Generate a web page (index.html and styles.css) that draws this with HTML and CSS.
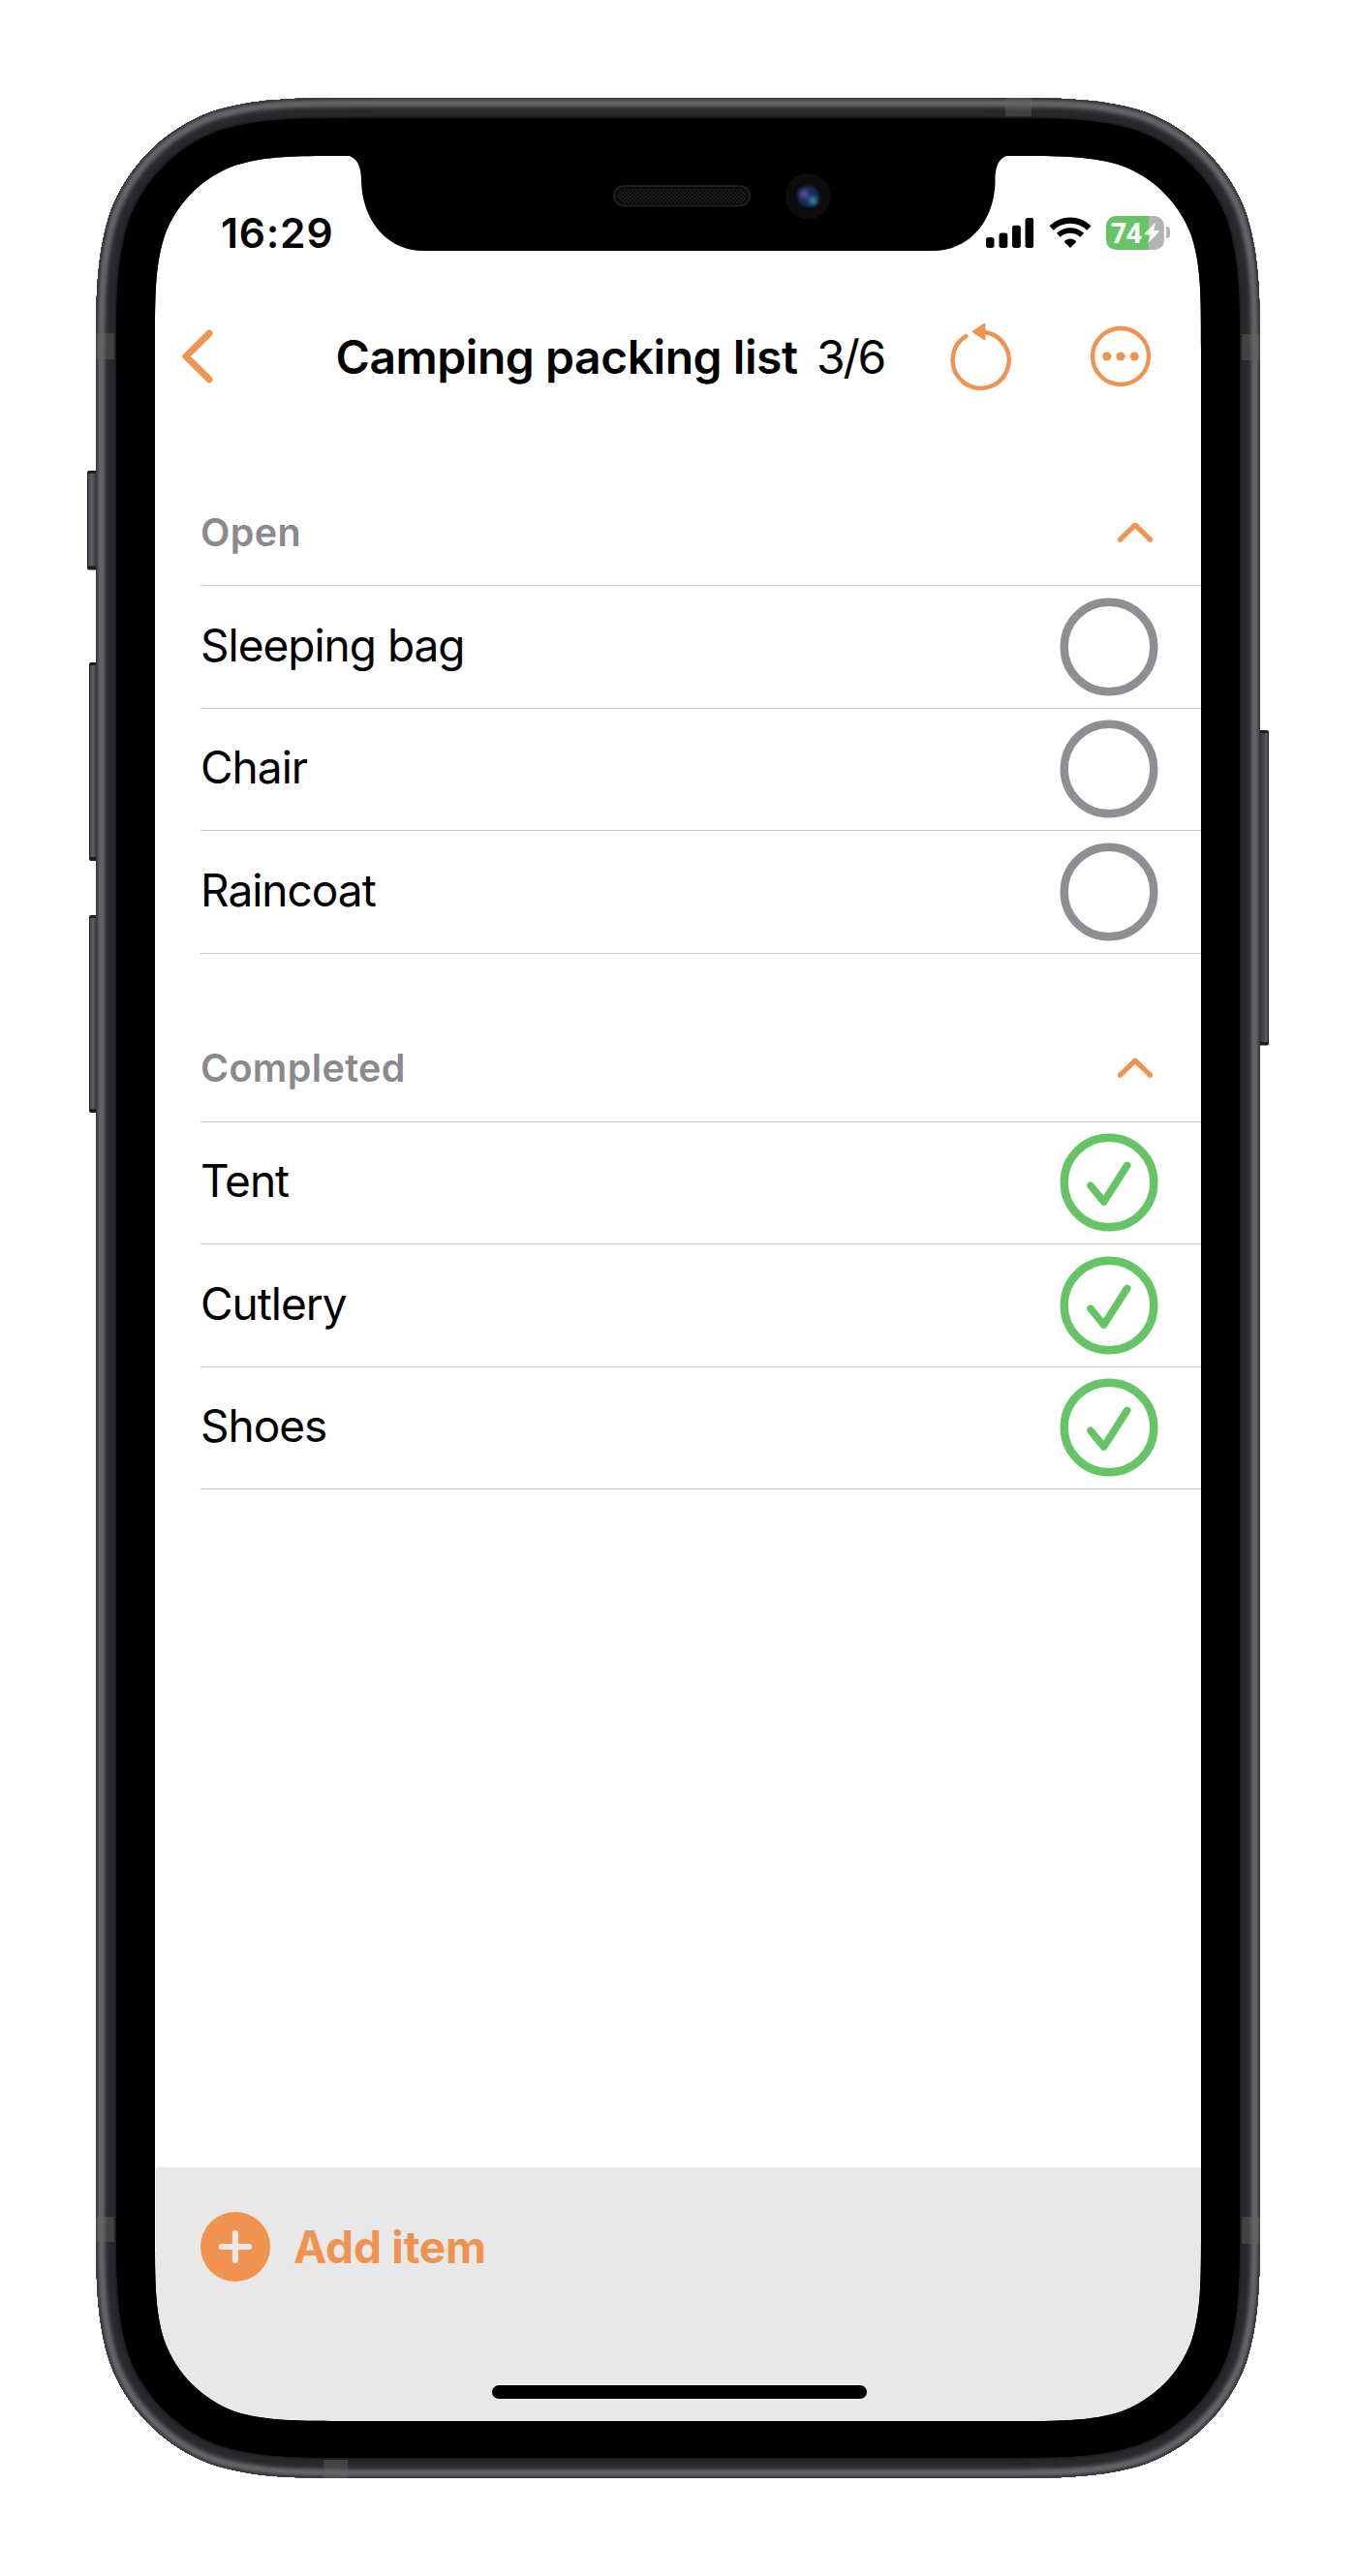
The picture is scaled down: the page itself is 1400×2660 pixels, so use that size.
FILE: index.html
```html
<!DOCTYPE html>
<html lang="en">
<head>
<meta charset="utf-8">
<title>Camping packing list</title>
<link rel="stylesheet" href="styles.css">
</head>
<body>
<svg class="defs" width="0" height="0" aria-hidden="true">
  <symbol id="chevron-up" viewBox="0 0 38 24"><path d="M3.5 19.2 19 4.2 34.5 19.2" fill="none" stroke="currentColor" stroke-width="5.2" stroke-linecap="round" stroke-linejoin="round"/></symbol>
  <symbol id="ring" viewBox="0 0 102 102"><circle cx="51" cy="51" r="46.3" fill="none" stroke="currentColor" stroke-width="8.4"/></symbol>
  <symbol id="ring-check" viewBox="0 0 102 102"><circle cx="51" cy="51" r="46.3" fill="none" stroke="currentColor" stroke-width="8.4"/><path d="M32 54.3 45.7 71 69.7 33.4" fill="none" stroke="currentColor" stroke-width="7.6" stroke-linecap="round" stroke-linejoin="round"/></symbol>
</svg>
<div class="stage">
  <main class="screen">
    <div class="status">
      <span class="time">16:29</span>
      <div class="indicators">
        <svg class="signal" viewBox="0 0 49 31"><rect y="20" width="8.5" height="11" rx="2.6"/><rect x="13.5" y="15.5" width="8.8" height="15.5" rx="2.6"/><rect x="27" y="7.7" width="8.8" height="23.3" rx="2.6"/><rect x="40.5" width="8.7" height="31" rx="2.6"/></svg>
        <svg class="wifi" viewBox="0 0 44 32"><g fill="none" stroke="#000" stroke-width="6.3"><path d="M2.6 11.4a28 28 0 0 1 38.8 0"/><path d="M9.8 18.8a17.8 17.8 0 0 1 24.4 0" stroke-width="5.6"/></g><path d="M22 32 16.3 26.3q-.8-1 .2-1.7a9 9 0 0 1 11 0q1 .7.2 1.7z"/></svg>
        <div class="battery"><span class="level">74</span><svg class="bolt" viewBox="0 0 16 23"><path d="M12.3.6.8 12 Q0 13.4 1.6 13.6H6.6L4.2 22.2 15.4 10.4Q16 9.2 14.7 9H10z"/></svg></div>
        <i class="nub"></i>
      </div>
    </div>

    <header class="nav">
      <svg class="back" viewBox="0 0 34 56"><path d="M29 4.3 5 28 29 51.7" fill="none" stroke="currentColor" stroke-width="7" stroke-linecap="round" stroke-linejoin="round"/></svg>
      <h1>Camping packing list</h1>
      <span class="count">3/6</span>
      <svg class="reset" viewBox="0 0 64 70"><path d="M17.3 14.2A29 29 0 1 0 36 10" fill="none" stroke="currentColor" stroke-width="4.4" stroke-linecap="round"/><path d="M24.6 9.4 36.5 1.6V17.2z" fill="currentColor" stroke="currentColor" stroke-width="1.8" stroke-linejoin="round"/></svg>
      <svg class="more" viewBox="0 0 64 64"><circle cx="32" cy="32" r="29" fill="none" stroke="currentColor" stroke-width="4.3"/><g fill="currentColor"><circle cx="17.8" cy="32" r="4.6"/><circle cx="32" cy="32" r="4.6"/><circle cx="46.2" cy="32" r="4.6"/></g></svg>
    </header>

    <div class="lists">
      <section>
        <h2>Open<svg class="chevron"><use href="#chevron-up"/></svg></h2>
        <ul>
          <li><span>Sleeping bag</span><svg class="mark"><use href="#ring"/></svg></li>
          <li><span>Chair</span><svg class="mark"><use href="#ring"/></svg></li>
          <li><span>Raincoat</span><svg class="mark"><use href="#ring"/></svg></li>
        </ul>
      </section>
      <section class="completed">
        <h2>Completed<svg class="chevron"><use href="#chevron-up"/></svg></h2>
        <ul>
          <li><span>Tent</span><svg class="mark"><use href="#ring-check"/></svg></li>
          <li><span>Cutlery</span><svg class="mark"><use href="#ring-check"/></svg></li>
          <li><span>Shoes</span><svg class="mark"><use href="#ring-check"/></svg></li>
        </ul>
      </section>
    </div>

    <footer>
      <div class="add">
        <svg class="plus" viewBox="0 0 72 72"><circle cx="36" cy="36" r="36" fill="currentColor"/><path d="M36 22v28M22 36h28" stroke="#e8e8e8" stroke-width="6.2" stroke-linecap="round"/></svg>
        <span>Add item</span>
      </div>
      <div class="home"></div>
    </footer>
  </main>

  <svg class="device" id="device" viewBox="0 0 1400 2660" aria-hidden="true"></svg>
</div>
<script src="device.js"></script>
</body>
</html>
```
FILE: styles.css
```css
* { box-sizing: border-box; margin: 0; padding: 0; }
body { background: #fff; font-family: Inter, "Liberation Sans", sans-serif; color: #000; }
svg { display: block; flex: none; }
.defs { position: absolute; }
.stage { position: relative; width: 1400px; height: 2660px; padding: 161px 160px 160px; overflow: hidden; }
.device { position: absolute; inset: 0; width: 1400px; height: 2660px; pointer-events: none; }
.screen { width: 1080px; height: 2339px; display: flex; flex-direction: column; background: #fff; }

.status { display: flex; justify-content: space-between; align-items: center; height: 80px; margin-top: 39px; padding: 0 32px 0 68px; }
.time { font-size: 42.5px; font-weight: 600; letter-spacing: .8px; }
.indicators { display: flex; align-items: center; }
.signal { width: 49px; height: 31px; margin-right: 16px; }
.wifi { width: 44px; height: 32px; margin-right: 15px; }
.battery { display: flex; align-items: center; width: 60px; height: 35px; padding-left: 5px; border-radius: 10px; background: linear-gradient(90deg, #64c466 44px, #b4b4b4 44px); }
.level { font: 700 28px/35px "Open Sans", sans-serif; letter-spacing: 0; color: #fff; }
.bolt { width: 16px; height: 23px; fill: #fff; margin-left: 2px; }
.nub { width: 4px; height: 12px; margin-left: 2px; border-radius: 0 4px 4px 0; background: #b4b4b4; }

.nav { display: flex; align-items: center; height: 80px; margin-top: 48px; padding-left: 26.5px; color: #f09351; }
.back { width: 34px; height: 56px; }
.nav h1 { width: 480px; margin-left: 126px; font-size: 48px; font-weight: 600; letter-spacing: -.45px; white-space: nowrap; color: #000; }
.count { width: 72px; margin-left: 16.5px; font-size: 48px; letter-spacing: -2.2px; color: #000; white-space: nowrap; }
.reset { width: 64px; height: 70px; margin-left: 65px; }
.more { width: 64px; height: 64px; margin-left: 81px; }

.lists { flex: 1; padding: 87px 0 0 47px; }
h2 { display: flex; justify-content: space-between; align-items: center; height: 110px; border-bottom: 1px solid #c8c8ca; padding: 0 49px 0 0; font-size: 39.5px; font-weight: 600; letter-spacing: .35px; color: #8a8a8e; }
.completed h2 { height: 174px; padding-top: 64px; }
.chevron { width: 38px; height: 24px; color: #f09351; }
ul { list-style: none; }
li { display: flex; justify-content: space-between; align-items: center; height: 126.5px; border-bottom: 1px solid #c8c8ca; padding-right: 44.3px; font-size: 46px; letter-spacing: -1px; }
li span { padding-bottom: 4px; }
.mark { width: 102px; height: 102px; color: #8e8e93; }
.completed .mark { color: #64c466; }

footer { height: 262px; margin-left: 1px; background: #e8e8e8; display: flex; flex-direction: column; justify-content: space-between; padding: 46px 0 23px 46px; }
.add { display: flex; align-items: center; gap: 24px; height: 72px; font-size: 46px; font-weight: 700; letter-spacing: -.2px; color: #f09351; }
.plus { width: 72px; height: 72px; }
.home { width: 387px; height: 14px; margin-left: 301px; border-radius: 7px; background: #000; box-shadow: 0 -1px 0 #f8f8f8; }
```
FILE: device.js
```js
// Rounded rectangle with continuous-curvature corners.
function squircle(x0, y0, x1, y1, r) {
  const k = [1.52866, 1.08849, 0.86841, 0.63149, 0.07491, 0.37282, 0.16906].map(v => v * r);
  const corner = (cx, cy, sx, sy, flip) => {
    const p = (a, b) => `${(cx + sx * a).toFixed(2)} ${(cy + sy * b).toFixed(2)}`;
    const q = (a, b) => flip ? p(b, a) : p(a, b);
    return `L${q(0, k[0])}C${q(0, k[1])} ${q(0, k[2])} ${q(k[4], k[3])}` +
      `C${q(k[6], k[5])} ${q(k[5], k[6])} ${q(k[3], k[4])}C${q(k[2], 0)} ${q(k[1], 0)} ${q(k[0], 0)}`;
  };
  return ('M' + corner(x0, y0, 1, 1, false).slice(1)) + corner(x1, y0, -1, 1, true) +
    corner(x1, y1, -1, -1, false) + corner(x0, y1, 1, -1, true) + 'Z';
}

const outer = squircle(99, 101, 1301, 2559, 190);
const inner = squircle(120, 122, 1280, 2538, 170);
const screen = squircle(160, 161, 1240, 2500, 131);
const notch = 'M357 160C368 162 373 170 373 187C374 228 400 259 437 259H963C1001 259 1027 228 1027.5 187C1027.5 170 1032 162 1043 160Z';

// Metal rim tones, one per pixel from the outside inwards.
const rim = ['#36373b', '#45464a', '#505155', '#5c5c60', '#636367', '#636367', '#626266', '#5c5c60', '#505054',
  '#444448', '#38383c', '#313135', '#2c2c30', '#2a2a2f', '#29292e', '#28282d', '#27272c', '#27272b', '#25252a', '#202024', '#1c1c21'];
const rings = rim.map((c, i) => `<use href="#rim" stroke="${c}" stroke-width="${(i + 1) * 2}"/>`).reverse().join('');

const keys = [[90, 486, 12, 102.5], [92, 684, 10, 205], [92, 945, 10, 204]];
const left = keys.map(([x, y, w, h]) => `<rect x="${x}" y="${y}" width="${w}" height="${h}" rx="2" fill="#1d1d21"/><rect x="${x + 1}" y="${y + 3}" width="${w}" height="${h - 7}" fill="url(#key)"/>`).join('');
const bands = [[1038, 101, 27, 19], [99, 344, 19, 27], [1282, 345, 19, 27], [99, 2289, 19, 26], [1282, 2289, 19, 28], [334, 2540, 25, 19]]
  .map(([x, y, w, h]) => `<rect x="${x}" y="${y}" width="${w}" height="${h}"/>`).join('');

document.getElementById('device').innerHTML = `
  <defs>
    <path id="rim" d="${outer}" fill="none"/>
    <clipPath id="body"><path d="${outer}"/></clipPath>
    <clipPath id="bezel"><path d="${outer}${screen}" clip-rule="evenodd"/></clipPath>
    <linearGradient id="key"><stop offset="0" stop-color="#46464b"/><stop offset=".3" stop-color="#5e5e64"/><stop offset=".55" stop-color="#45454b"/><stop offset="1" stop-color="#3a3a40"/></linearGradient>
    <linearGradient id="keyR"><stop offset="0" stop-color="#3a3a3e"/><stop offset=".5" stop-color="#47474b"/><stop offset=".7" stop-color="#626267"/><stop offset="1" stop-color="#3a3a3e"/></linearGradient>
    <pattern id="mesh" width="4" height="4" patternUnits="userSpaceOnUse"><path d="M0 0h2v2H0zM2 2h2v2H2z" fill="#1d1d1d"/></pattern>
    <radialGradient id="lens"><stop offset="0" stop-color="#1c3a66"/><stop offset=".7" stop-color="#15294e"/><stop offset="1" stop-color="#0a1226"/></radialGradient>
    <filter id="soft" x="-50%" y="-50%" width="200%" height="200%"><feGaussianBlur stdDeviation="2.2"/></filter>
  </defs>
  ${left}
  <rect x="1299" y="754" width="11" height="325.5" rx="2" fill="#1d1d21"/><rect x="1301" y="757" width="8.5" height="319" fill="url(#keyR)"/>
  <g clip-path="url(#bezel)">
    <path d="${outer}"/>
    <g fill="none">${rings}</g>
    <path d="${inner}"/>
    <g clip-path="url(#body)" fill="#6a6461" fill-opacity=".42">${bands}</g>
  </g>
  <path d="${notch}"/>
  <rect x="634" y="192" width="140" height="20.5" rx="10.2" fill="#0b0b0b" stroke="#262626" stroke-width="1.6"/>
  <rect x="638" y="195" width="132" height="15" rx="7.5" fill="url(#mesh)"/>
  <circle cx="834.4" cy="202.7" r="23.5" fill="#0c0c0d"/>
  <circle cx="834.4" cy="202.7" r="12.5" fill="url(#lens)"/>
  <g filter="url(#soft)"><circle cx="830" cy="200" r="4" fill="#6a4ba6"/><circle cx="839.5" cy="207.5" r="4" fill="#3a86a8"/></g>`;
```
